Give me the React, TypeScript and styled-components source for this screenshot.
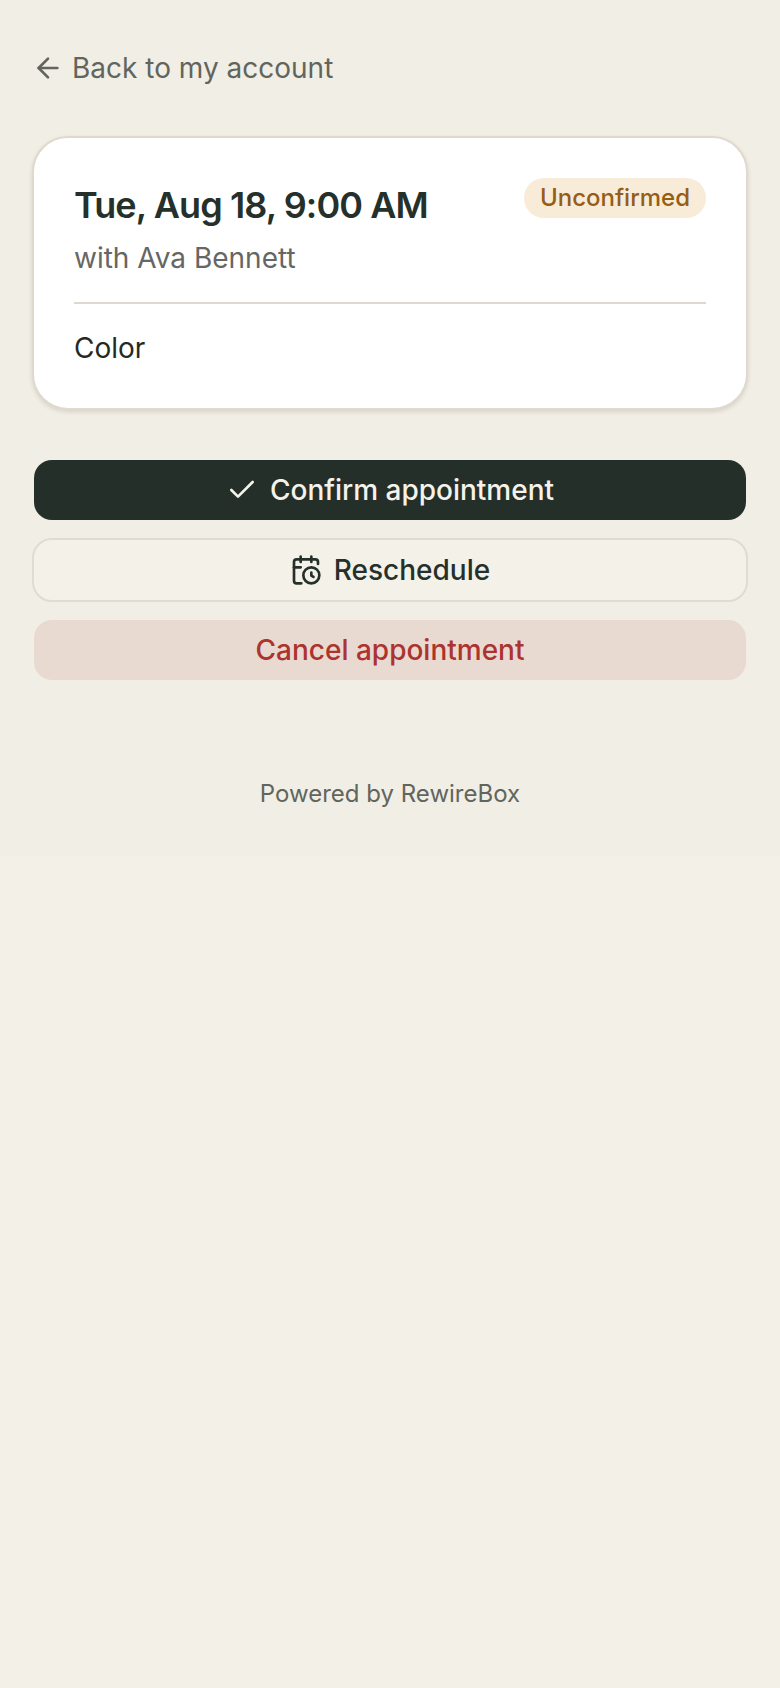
import styled, { createGlobalStyle, css } from "styled-components";
import { ArrowLeft, CalendarClock, Check } from "lucide-react";

const GlobalStyle = createGlobalStyle`
  *, *::before, *::after { box-sizing: border-box; }
  body {
    margin: 0;
    background: #f3f0e8;
    color: #25302a;
    font-family: Inter, "Liberation Sans", sans-serif;
    font-size: 28px;
    line-height: 40px;
  }
`;

const Page = styled.div`
  background: #f1eee6;
  padding: 48px 32px 46px;
`;

const BackLink = styled.a`
  display: inline-flex;
  align-items: center;
  gap: 8px;
  color: #62655c;
  text-decoration: none;
  vertical-align: top;
`;

const Main = styled.main`
  display: flex;
  flex-direction: column;
  gap: 48px;
  margin-top: 48px;
`;

const Card = styled.section`
  padding: 40px;
  border: 2px solid #dfd9ce;
  border-radius: 36px;
  background: #fff;
  box-shadow: 0 2px 4px rgba(60, 50, 30, 0.14);
`;

const CardHeader = styled.header`
  display: flex;
  align-items: flex-start;
  justify-content: space-between;
  gap: 24px;
  padding-bottom: 24px;
  border-bottom: 2px solid #ded8ce;
`;

const Title = styled.h1`
  margin: 0 0 6px;
  font-size: 36px;
  font-weight: 600;
  line-height: 54px;
  letter-spacing: -0.025em;
`;

const Provider = styled.p`
  margin: 0;
  color: #666663;
`;

const Badge = styled.span`
  flex-shrink: 0;
  padding: 4px 16px;
  border-radius: 20px;
  background: #f8ecd9;
  color: #955d16;
  font-size: 24px;
  font-weight: 500;
  line-height: 32px;
`;

const Services = styled.ul`
  margin: 0;
  padding: 24px 0 0;
  list-style: none;
  color: #242926;
`;

const Actions = styled.div`
  display: flex;
  flex-direction: column;
  gap: 16px;
`;

const variants = {
  primary: css`
    background-color: #242f29;
    color: #f5f2ea;
  `,
  outline: css`
    background-color: #f4f1e8;
    border-color: #dfdcd0;
    color: #25302a;
  `,
  danger: css`
    background-color: #e9dad1;
    color: #ac332e;
  `,
};

const Button = styled.button<{ $variant: keyof typeof variants }>`
  display: flex;
  align-items: center;
  justify-content: center;
  gap: 12px;
  width: 100%;
  padding: 10px 24px;
  border: 2px solid transparent;
  border-radius: 20px;
  background-clip: padding-box;
  font: inherit;
  font-weight: 500;
  cursor: pointer;
  ${({ $variant }) => variants[$variant]}
`;

const Footer = styled.footer`
  margin-top: 96px;
  color: #62655c;
  font-size: 24px;
  line-height: 32px;
  text-align: center;
`;

export default function App() {
  return (
    <>
      <GlobalStyle />
      <Page>
        <BackLink href="#account">
          <ArrowLeft size={32} aria-hidden />
          Back to my account
        </BackLink>
        <Main>
          <Card>
            <CardHeader>
              <div>
                <Title>Tue, Aug 18, 9:00 AM</Title>
                <Provider>with Ava Bennett</Provider>
              </div>
              <Badge>Unconfirmed</Badge>
            </CardHeader>
            <Services>
              <li>Color</li>
            </Services>
          </Card>
          <Actions>
            <Button type="button" $variant="primary">
              <Check size={32} aria-hidden />
              Confirm appointment
            </Button>
            <Button type="button" $variant="outline">
              <CalendarClock size={32} aria-hidden />
              Reschedule
            </Button>
            <Button type="button" $variant="danger">
              Cancel appointment
            </Button>
          </Actions>
        </Main>
        <Footer>Powered by RewireBox</Footer>
      </Page>
    </>
  );
}
